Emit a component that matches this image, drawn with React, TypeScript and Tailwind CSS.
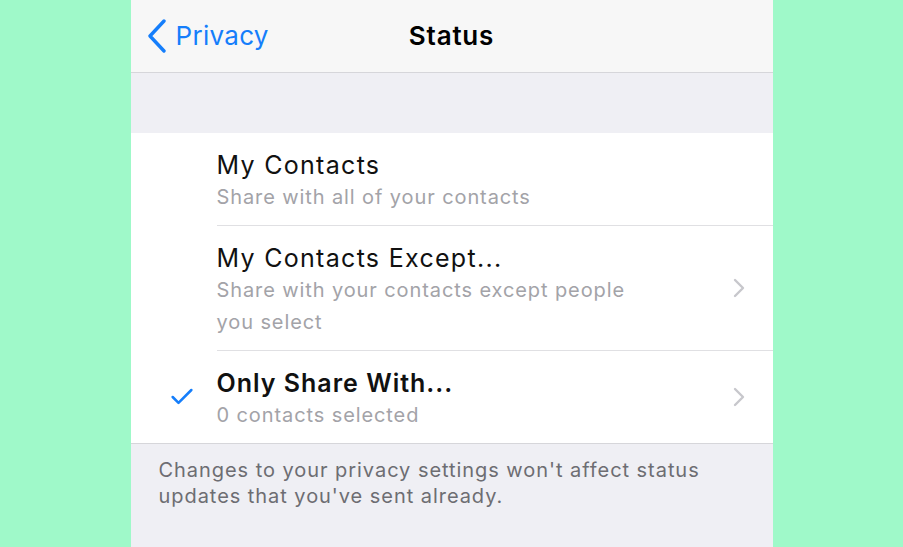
import { Check } from "lucide-react";

const OPTIONS = [
  { title: "My Contacts", sub: "Share with all of your contacts", checked: false, more: false },
  { title: "My Contacts Except...", sub: "Share with your contacts except people you select", checked: false, more: true },
  { title: "Only Share With...", sub: "0 contacts selected", checked: true, more: true },
];

export default function App() {
  return (
    <div className="flex h-[547px] w-full justify-center bg-[#9ff9c9] font-['Inter',sans-serif]">
      <div className="flex w-[642px] flex-col bg-[#efeff4]">
        {/* nav bar */}
        <header className="relative flex h-[73px] shrink-0 items-center border-b border-[#d6d6da] bg-[#f7f7f7]">
          <div className="flex items-center pl-[16px] text-[#157efb]">
            <svg width="20" height="34" viewBox="0 0 20 34" fill="none" stroke="currentColor" strokeWidth={3.4} strokeLinecap="round" strokeLinejoin="round">
              <polyline points="17,2 3,17 17,32" />
            </svg>
            <span className="ml-[9px] text-[26px] leading-none tracking-[0.3px]">Privacy</span>
          </div>
          <span className="absolute left-1/2 -translate-x-1/2 text-[26px] font-semibold leading-none tracking-[0.8px] text-black">
            Status
          </span>
        </header>

        <div className="h-[60px] shrink-0" />

        <ul className="border-b border-[#d6d6da] bg-white">
          {OPTIONS.map((o, i) => (
            <li key={o.title} className="flex">
              <div className="flex w-[86px] shrink-0 items-center justify-center pl-[16px]">
                {o.checked && <Check className="h-[28px] w-[28px] text-[#157efb]" strokeWidth={2.2} />}
              </div>
              <div
                className={`flex flex-1 items-center pr-[28px] ${i < OPTIONS.length - 1 ? "border-b border-[#e0e0e3]" : ""}`}
              >
                <div className="flex-1 pb-[12px] pt-[16px]">
                  <div
                    className={`text-[25px] leading-[32px] text-[#111] ${o.checked ? "font-semibold tracking-[1px]" : "tracking-[1.3px]"}`}
                  >
                    {o.title}
                  </div>
                  <div className="max-w-[430px] text-[20px] leading-[32px] tracking-[0.9px] text-[#a3a3a8]">{o.sub}</div>
                </div>
                {o.more && (
                  <svg width="12" height="20" viewBox="0 0 12 20" fill="none" stroke="#c7c7cc" strokeWidth={2.4} strokeLinecap="round" strokeLinejoin="round">
                    <polyline points="2,2 10,10 2,18" />
                  </svg>
                )}
              </div>
            </li>
          ))}
        </ul>

        <p className="px-[28px] pt-[13px] text-[20px] leading-[26px] tracking-[0.95px] text-[#6d6d72]">
          Changes to your privacy settings won't affect status updates that you've sent already.
        </p>
      </div>
    </div>
  );
}
